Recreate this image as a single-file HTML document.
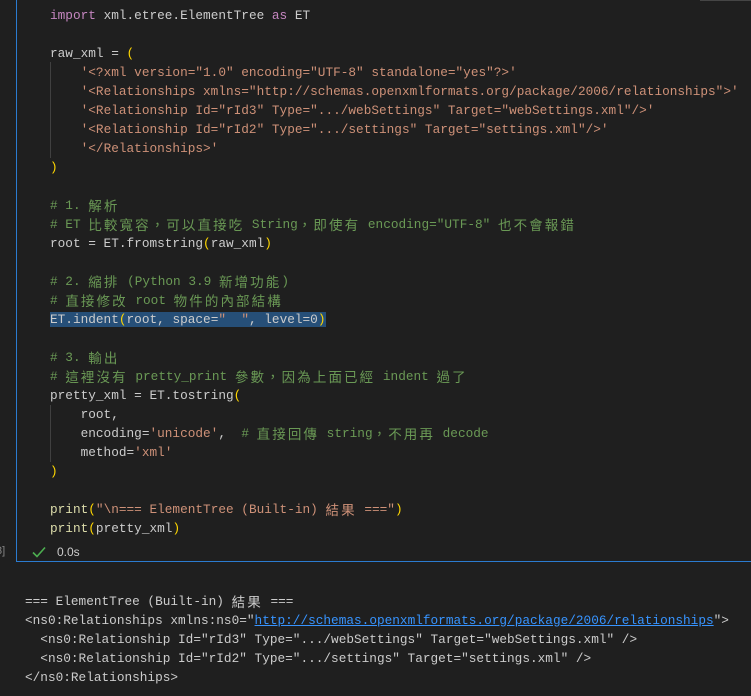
<!DOCTYPE html>
<html><head><meta charset="utf-8"><style>
html,body{margin:0;padding:0;background:#1f1f1f;width:751px;height:696px;overflow:hidden;position:relative}
.code,.out{position:absolute;margin:0;font-family:"Liberation Mono","Noto Sans CJK TC",monospace;font-size:12.75px;line-height:19px;white-space:pre;color:#cccccc}
.code{left:50px;top:6px}
.out{left:25px;top:592px}
.z{font-family:"Noto Sans CJK TC",sans-serif;font-size:13.5px;letter-spacing:2.1px;display:inline-block;height:19px;line-height:19px;vertical-align:top;overflow:visible}
.cell{position:absolute;left:16px;top:-2px;width:760px;height:563px;border-left:1px solid #2b7bd0;border-bottom:1px solid #2b7bd0}
.k{color:#c586c0}.s{color:#ce9178}.c{color:#6a9955}.p{color:#ffd700}.f{color:#dcdcaa}.v{color:#9cdcfe}.n{color:#b5cea8}
.sel{background:#264f78}
.guide{position:absolute;width:1px;background:#404040}
a{color:#3794ff;text-decoration:underline}
</style></head><body>
<div class="cell"></div>
<div style="position:absolute;left:700px;top:0;width:51px;height:1px;background:#454545"></div>
<div class="guide" style="left:50px;top:62px;height:96px"></div>
<div class="guide" style="left:50px;top:405px;height:57px"></div>
<pre class="code"><span class="k">import</span> xml.etree.ElementTree <span class="k">as</span> ET

raw_xml = <span class="p">(</span>
    <span class="s">'&lt;?xml version="1.0" encoding="UTF-8" standalone="yes"?&gt;'</span>
    <span class="s">'&lt;Relationships xmlns="http://schemas.openxmlformats.org/package/2006/relationships"&gt;'</span>
    <span class="s">'&lt;Relationship Id="rId3" Type=".../webSettings" Target="webSettings.xml"/&gt;'</span>
    <span class="s">'&lt;Relationship Id="rId2" Type=".../settings" Target="settings.xml"/&gt;'</span>
    <span class="s">'&lt;/Relationships&gt;'</span>
<span class="p">)</span>

<span class="c"># 1. <span class="z">解析</span></span>
<span class="c"># ET <span class="z">比較寬容，可以直接吃</span> String<span class="z">，即使有</span> encoding="UTF-8" <span class="z">也不會報錯</span></span>
root = ET.fromstring<span class="p">(</span>raw_xml<span class="p">)</span>

<span class="c"># 2. <span class="z">縮排</span> (Python 3.9 <span class="z">新增功能</span>)</span>
<span class="c"># <span class="z">直接修改</span> root <span class="z">物件的內部結構</span></span>
<span class="sel">ET.indent<span class="p">(</span>root, space=<span class="s">"  "</span>, level=0<span class="p">)</span></span>

<span class="c"># 3. <span class="z">輸出</span></span>
<span class="c"># <span class="z">這裡沒有</span> pretty_print <span class="z">參數，因為上面已經</span> indent <span class="z">過了</span></span>
pretty_xml = ET.tostring<span class="p">(</span>
    root,
    encoding=<span class="s">'unicode'</span>,  <span class="c"># <span class="z">直接回傳</span> string<span class="z">，不用再</span> decode</span>
    method=<span class="s">'xml'</span>
<span class="p">)</span>

<span class="f">print</span><span class="p">(</span><span class="s">"\n=== ElementTree (Built-in) <span class="z">結果</span> ==="</span><span class="p">)</span>
<span class="f">print</span><span class="p">(</span>pretty_xml<span class="p">)</span></pre>
<div style="position:absolute;left:-4px;top:545px;font:11px 'Liberation Sans',sans-serif;color:#858585">3]</div>
<svg style="position:absolute;left:31px;top:545px" width="16" height="14" viewBox="0 0 16 14"><path d="M2 7.5 L6 11.5 L14 2.5" fill="none" stroke="#4caf50" stroke-width="1.6"/></svg>
<div style="position:absolute;left:57px;top:545px;font:12px 'Liberation Sans',sans-serif;color:#cccccc">0.0s</div>
<pre class="out">=== ElementTree (Built-in) <span class="z">結果</span> ===
&lt;ns0:Relationships xmlns:ns0="<a>http://schemas.openxmlformats.org/package/2006/relationships</a>"&gt;
  &lt;ns0:Relationship Id="rId3" Type=".../webSettings" Target="webSettings.xml" /&gt;
  &lt;ns0:Relationship Id="rId2" Type=".../settings" Target="settings.xml" /&gt;
&lt;/ns0:Relationships&gt;</pre>
</body></html>
